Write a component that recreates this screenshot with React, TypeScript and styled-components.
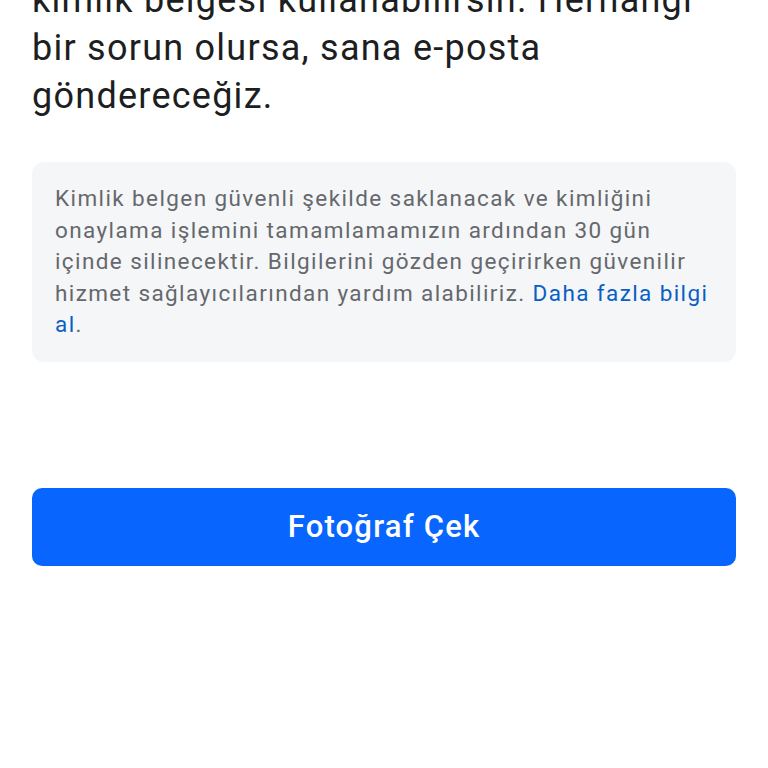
import React from 'react';
import styled, { createGlobalStyle } from 'styled-components';

const GlobalStyle = createGlobalStyle`
    html, body {
        margin: 0;
        padding: 0;
        background: #ffffff;
    }
    body {
        font-family: Roboto, "Liberation Sans", sans-serif;
        -webkit-font-smoothing: antialiased;
    }
`

const App: React.FC = () => {
    return (
        <>
            <GlobalStyle />
            <Page>
                <Heading>
                    kimlik belgesi kullanabilirsin. Herhangi bir sorun olursa, sana e-posta göndereceğiz.
                </Heading>

                <InfoBox>
                    <InfoText>
                        Kimlik belgen güvenli şekilde saklanacak ve kimliğini onaylama işlemini
                        tamamlamamızın ardından 30 gün içinde silinecektir. Bilgilerini gözden
                        geçirirken güvenilir hizmet sağlayıcılarından yardım alabiliriz.{' '}
                        <LearnMore href="#">Daha fazla bilgi al</LearnMore>.
                    </InfoText>
                </InfoBox>

                <PrimaryButton type="button">Fotoğraf Çek</PrimaryButton>
            </Page>
        </>
    )
}

export default App

const Page = styled.div`
    width: 768px;
    height: 768px;
    overflow: hidden;
    box-sizing: border-box;
    padding: 0 32px;
    display: flex;
    flex-direction: column;
`

const Heading = styled.h1`
    margin: -24px 0 0;
    font-size: 36px;
    line-height: 48px;
    font-weight: 400;
    color: #1c1e21;
    letter-spacing: 1.25px;
`

const InfoBox = styled.div`
    margin-top: 42px;
    background: #f5f6f8;
    border-radius: 12px;
    padding: 21px 23px;
`

const InfoText = styled.p`
    margin: 0;
    font-size: 22.5px;
    line-height: 31.5px;
    color: #65686c;
    letter-spacing: 1.4px;
`

const LearnMore = styled.a`
    color: #0a5fc4;
    text-decoration: none;
`

const PrimaryButton = styled.button`
    margin-top: 126px;
    height: 78px;
    width: 100%;
    border: none;
    border-radius: 10px;
    background: #0866ff;
    color: #ffffff;
    font-family: Roboto, "Liberation Sans", sans-serif;
    font-size: 31px;
    font-weight: 500;
    letter-spacing: 1.2px;
    cursor: pointer;
`
